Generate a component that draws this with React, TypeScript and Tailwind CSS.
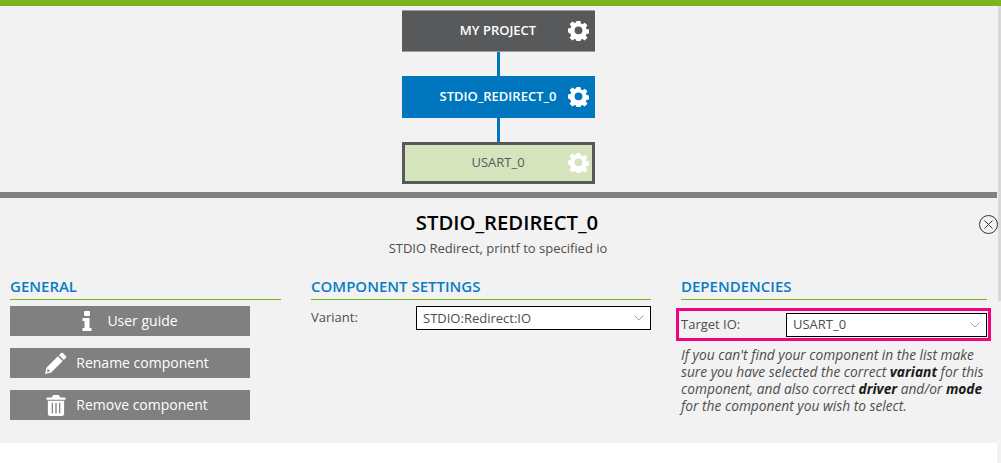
const GearIcon = ({ className }: { className?: string }) => (
  <svg viewBox="0 0 24 24" className={className} fill="currentColor">
    <path
      fillRule="evenodd"
      d="M9.800 1h4.400l.6 3.100 1.700.7 2.600-1.800 3.100 3.100-1.800 2.600.7 1.700 3.100.6v4.400l-3.100.6-.7 1.700 1.800 2.600-3.100 3.100-2.600-1.800-1.700.7-.6 3.100H9.800l-.6-3.100-1.700-.7-2.600 1.800-3.100-3.100 1.800-2.600-.7-1.700L-.1 14V9.600L3 9l.7-1.700L1.900 4.700 5 1.600l2.600 1.800 1.700-.7zM12 7.300a4.500 4.500 0 1 0 0 9 4.500 4.500 0 0 0 0-9z"
    />
  </svg>
)

const InfoIcon = () => (
  <svg viewBox="0 0 10 20" className="w-[10px] h-[20px]" fill="currentColor">
    <rect x="2" y="0" width="6" height="5" rx="1" />
    <path d="M0.500 7h7v10h2v3h-9v-3h2v-7h-2z" />
  </svg>
)

const PencilIcon = () => (
  <svg viewBox="0 0 22 22" className="w-[22px] h-[22px]" fill="currentColor">
    <path
      fillRule="evenodd"
      d="M16 1.200c.6-.6 1.500-.6 2.100 0l2.700 2.700c.6.6.6 1.500 0 2.100l-2 2-4.800-4.800zM12.900 4.300l4.800 4.800L6.200 20.600 0 22l1.400-6.200zM2.700 16.800l-.7 3.200 3.200-.7z"
    />
  </svg>
)

const TrashIcon = () => (
  <svg viewBox="0 0 20 22" className="w-[20px] h-[21px]" fill="currentColor">
    <path
      fillRule="evenodd"
      d="M7 0h6l1.500 2.500H19c.6 0 1 .4 1 1V5H0V3.500c0-.6.4-1 1-1h4.500zM1.500 6h17v14c0 1.100-.9 2-2 2h-13c-1.100 0-2-.9-2-2zM5.500 8.500v10.500h1.300V8.500zM9.300 8.500v10.500h1.400V8.500zM13.200 8.500v10.500h1.300V8.500z"
    />
  </svg>
)

const Chevron = () => (
  <svg viewBox="0 0 10 6" className="w-[10px] h-[6px]" fill="none" stroke="#a6a6a6" strokeWidth="1">
    <path d="M.5.500 5 5 9.500.500" />
  </svg>
)

const Heading = ({ children }: { children: string }) => (
  <h2 className="text-[15px] leading-[20px] font-semibold text-[#0a7cc4] border-b border-[#7ab51d] pb-[3px] mb-[6px] pt-[1px]">
    {children}
  </h2>
)

const SelectBox = ({ value, className }: { value: string; className: string }) => (
  <div className={`flex items-center justify-between bg-white border border-black pl-[6px] pr-[6px] text-[13px] text-[#4d4d4d] ${className}`}>
    <span className="pt-[1px]">{value}</span>
    <Chevron />
  </div>
)

const ACTIONS = [
  { label: 'User guide', icon: <InfoIcon />, cls: 'gap-[15px]' },
  { label: 'Rename component', icon: <PencilIcon />, cls: 'gap-[9px] pr-[6px]' },
  { label: 'Remove component', icon: <TrashIcon />, cls: 'gap-[10px] pr-[6px]' },
]

export default function App() {
  return (
    <div className="w-[1001px] h-[463px] overflow-hidden bg-white flex flex-col font-['Open_Sans',sans-serif]">
      <div className="h-[6px] bg-[#7ab51d] shrink-0" />
      <div className="flex flex-1 min-h-0">
        <div className="flex-1 min-w-0 flex flex-col">
          <div className="bg-[#f2f2f2]">
            {/* component tree */}
            <div className="h-[186px] pt-[4px] flex flex-col items-center pr-[1px]">
              <div className="w-[193px] h-[42px] bg-[#58595b] border-y border-[#9d9d9d] relative flex items-center justify-center text-white text-[13px] font-semibold">
                MY PROJECT
                <GearIcon className="absolute right-[6px] top-[9px] w-[21px] h-[21px] text-white" />
              </div>
              <div className="w-[3px] h-[24px] bg-[#0076be]" />
              <div className="w-[193px] h-[42px] bg-[#0076be] relative flex items-center justify-center text-white text-[13px] font-semibold">
                STDIO_REDIRECT_0
                <GearIcon className="absolute right-[6px] top-[10px] w-[21px] h-[21px] text-white" />
              </div>
              <div className="w-[3px] h-[24px] bg-[#0076be]" />
              <div className="w-[193px] h-[42px] bg-[#d6e4bd] border-[3px] border-[#58595b] relative flex items-center justify-center text-[#58595b] text-[13px]">
                USART_0
                <GearIcon className="absolute right-[3px] top-[7px] w-[21px] h-[21px] text-white" />
              </div>
            </div>
            <div className="h-[6px] bg-[#808080]" />

            {/* details */}
            <div className="relative h-[245px]">
              <div className="pt-[12px] text-center pr-[1px]">
                <h1 className="text-[20.300px] leading-[24px] font-semibold text-black pl-[18px]">STDIO_REDIRECT_0</h1>
                <p className="text-[13px] leading-[18px] mt-[5px] text-[#4d4d4d]">STDIO Redirect, printf to specified io</p>
              </div>
              <div className="absolute right-[-1px] top-[17px] w-[19px] h-[19px] rounded-full border border-[#333] flex items-center justify-center">
                <svg viewBox="0 0 9 9" className="w-[9px] h-[9px]" stroke="#333" strokeWidth="1">
                  <path d="M.5.500l8 8M8.500.500l-8 8" />
                </svg>
              </div>

              <div className="grid grid-cols-[271px_340px_306px] gap-x-[30px] pl-[10px] mt-[18px]">
                <section>
                  <Heading>GENERAL</Heading>
                  <div className="flex flex-col gap-[12px] w-[240px]">
                    {ACTIONS.map((a) => (
                      <div key={a.label} className={`h-[30px] bg-[#808080] text-white text-[14px] font-medium flex items-center justify-center ${a.cls}`}>
                        {a.icon}
                        <span className="pb-[2px]">{a.label}</span>
                      </div>
                    ))}
                  </div>
                </section>

                <section>
                  <Heading>COMPONENT SETTINGS</Heading>
                  <div className="flex items-center text-[13px] text-[#4d4d4d]">
                    <span className="w-[105px]">Variant:</span>
                    <SelectBox value="STDIO:Redirect:IO" className="w-[235px] h-[24px]" />
                  </div>
                </section>

                <section>
                  <Heading>DEPENDENCIES</Heading>
                  <div className="flex items-center text-[13px] text-[#4d4d4d] border-[3px] border-[#f0047f] ml-[-5px] mr-[-4px] mt-[8px] h-[33px] pl-[2px] pr-[1px]">
                    <span className="w-[105px]">Target IO:</span>
                    <SelectBox value="USART_0" className="w-[201px] h-[24px]" />
                  </div>
                  <p className="mt-[5px] text-[13.750px] leading-[17px] italic text-[#4d4d4d] whitespace-nowrap">
                    If you can't find your component in the list make
                    <br />
                    sure you have selected the correct <b className="text-[#1a1a1a]">variant</b> for this
                    <br />
                    component, and also correct <b className="text-[#1a1a1a]">driver</b> and/or <b className="text-[#1a1a1a]">mode</b>
                    <br />
                    for the component you wish to select.
                  </p>
                </section>
              </div>
            </div>
          </div>
        </div>
        <div className="w-[4px] bg-[#f2f2f2] shrink-0">
          <div className="h-[295px] bg-[#d9d9d9] ml-[1px] w-[3px]" />
        </div>
      </div>
    </div>
  )
}
